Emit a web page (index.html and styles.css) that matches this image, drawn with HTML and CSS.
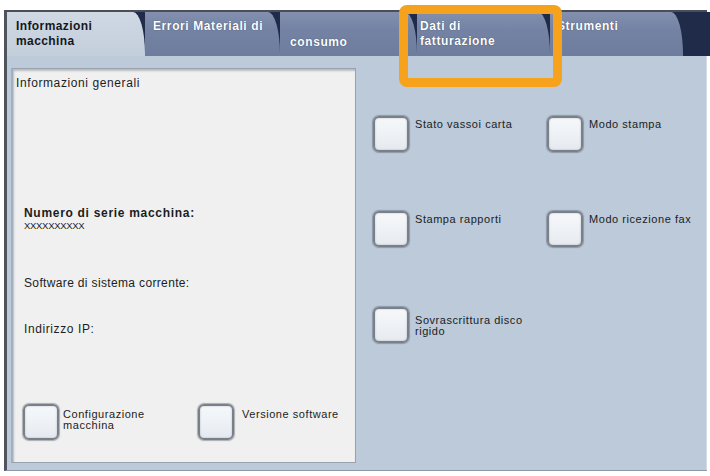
FILE: index.html
```html
<!DOCTYPE html>
<html lang="it">
<head>
<meta charset="utf-8">
<title>Informazioni macchina</title>
<link rel="stylesheet" href="styles.css">
</head>
<body>
<div class="frame">
  <div class="tabs">
    <div class="tab active">Informazioni<br>macchina</div>
    <div class="tab t2">Errori Materiali di</div>
    <div class="tab t3">consumo</div>
    <div class="tab t4">Dati di<br>fatturazione</div>
    <div class="tab t5">Strumenti</div>
    <div class="tab-rest"></div>
  </div>
  <div class="content">
    <div class="panel">
      <div class="gen">Informazioni generali</div>
      <div class="serial">
        <div class="serial-title">Numero di serie macchina:</div>
        <div class="xs">XXXXXXXXXX</div>
      </div>
      <div class="sw">Software di sistema corrente:</div>
      <div class="ip">Indirizzo IP:</div>
      <div class="panel-btns">
        <div class="btn"><span class="sq"></span><span class="lbl l2">Configurazione<br>macchina</span></div>
        <div class="btn"><span class="sq"></span><span class="lbl l2">Versione software</span></div>
      </div>
    </div>
    <div class="grid">
      <div class="btn"><span class="sq"></span><span class="lbl">Stato vassoi carta</span></div>
      <div class="btn"><span class="sq"></span><span class="lbl">Modo stampa</span></div>
      <div class="btn"><span class="sq"></span><span class="lbl">Stampa rapporti</span></div>
      <div class="btn"><span class="sq"></span><span class="lbl">Modo ricezione fax</span></div>
      <div class="btn"><span class="sq"></span><span class="lbl l3">Sovrascrittura disco<br>rigido</span></div>
    </div>
  </div>
</div>
<div class="highlight"></div>
</body>
</html>
```

FILE: styles.css
```css
html, body {
  margin: 0;
  padding: 0;
  background: #ffffff;
}
body {
  font-family: "Liberation Sans", Arial, sans-serif;
  color: #1b1d22;
  width: 710px;
  height: 476px;
  overflow: hidden;
}
.frame {
  margin: 10px 0 0 4px;
  width: 703px;
  border-left: 3px solid #4f545c;
  border-top: 2px solid #4a4e56;
  border-bottom: 1px solid #8f99a6;
  box-sizing: border-box;
}
.tabs {
  display: flex;
  height: 44px;
  background: #1f2b49;
  margin-right: -3px;
}
.tab {
  box-sizing: border-box;
  height: 44px;
  padding: 7px 0 0 10px;
  font-size: 12px;
  line-height: 15px;
  font-weight: bold;
  letter-spacing: 0.6px;
  color: #ffffff;
  text-shadow: 0 0 1px #2c3858;
  background: linear-gradient(#8390ae, #7483a4 40%, #6e7c9d);
  border-top-right-radius: 12px 42px;
}
.tab.active {
  width: 138px;
  padding-left: 9px;
  letter-spacing: 0.4px;
  color: #15171c;
  text-shadow: none;
  background: linear-gradient(#cfd8e3, #c4cfdc);
}
.t2 { width: 135px; padding-left: 8px; }
.t3 { width: 137px; padding-top: 23px; }
.t4 { width: 133px; padding-left: 3px; }
.t5 { width: 133px; padding-left: 7px; }
.tab-rest { flex: 1; }

.content {
  display: flex;
  height: 414px;
  background: #bccada;
  padding: 12px 0 0 4px;
  box-sizing: border-box;
  border-right: 1px solid #d3dbe4;
}
.panel {
  box-sizing: border-box;
  width: 345px;
  height: 395px;
  background: #f0f0f0;
  border: 1px solid #98a2ae;
  border-left: 2px solid #a2afbf;
  box-shadow: inset 1px 2px 2px rgba(80, 88, 100, 0.35);
  padding: 7px 0 0 3px;
  display: flex;
  flex-direction: column;
  font-size: 12px;
  line-height: 14px;
  letter-spacing: 0.6px;
}
.serial, .sw, .ip, .panel-btns {
  margin-left: 8px;
}
.serial { margin-top: 116px; }
.serial-title { font-weight: bold; letter-spacing: 0.7px; }
.xs {
  font-size: 9.5px;
  line-height: 11px;
  letter-spacing: -0.3px;
}
.sw { margin-top: 45px; letter-spacing: 0.35px; }
.ip { margin-top: 32px; }
.panel-btns {
  margin-top: 68px;
  margin-left: 7px;
  display: grid;
  grid-template-columns: 175px 150px;
  letter-spacing: 0;
}

.grid {
  display: grid;
  grid-template-columns: 174px 150px;
  grid-template-rows: 95px 96px 40px;
  padding: 48px 0 0 17px;
}
.btn {
  display: flex;
  align-items: flex-start;
  gap: 6px;
}
.panel-btns .btn { gap: 4px; }
.panel-btns .btn + .btn { gap: 8px; }
.sq {
  flex: none;
  box-sizing: border-box;
  width: 36px;
  height: 36px;
  border: 2px solid #7a8089;
  border-radius: 6px;
  background: linear-gradient(#f6f8fb, #e6eaf0);
  box-shadow: 0 0 1px 1px rgba(85, 90, 100, 0.45), inset 0 0 2px rgba(90, 95, 105, 0.4);
}
.lbl {
  font-size: 11px;
  line-height: 11px;
  letter-spacing: 0.55px;
  padding-top: 3px;
  white-space: nowrap;
  color: #1b1d22;
}
.lbl.l2 { padding-top: 5px; }
.lbl.l3 { padding-top: 8px; }

.highlight {
  position: absolute;
  left: 399px;
  top: 5px;
  width: 163px;
  height: 82px;
  box-sizing: border-box;
  border: 9px solid #f6a21c;
  border-radius: 8px;
}
```
